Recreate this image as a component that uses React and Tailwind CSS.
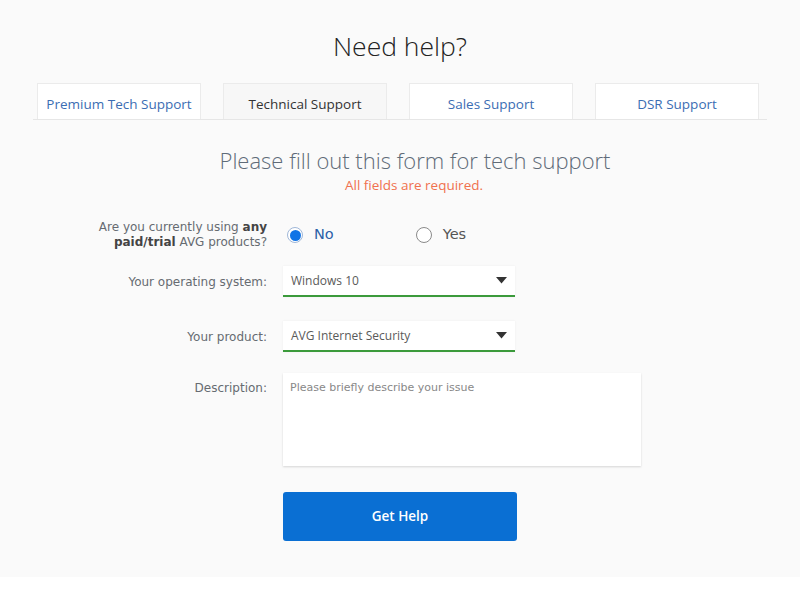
import React from "react";

const tabs = [
  { label: "Premium Tech Support", active: false },
  { label: "Technical Support", active: true },
  { label: "Sales Support", active: false },
  { label: "DSR Support", active: false },
];

function Caret() {
  return (
    <svg width="11" height="7" viewBox="0 0 11 7" className="shrink-0">
      <path d="M0 0 L11 0 L5.5 6.5 Z" fill="#333" />
    </svg>
  );
}

function Select({ value }) {
  return (
    <div className="flex h-[31px] w-[232px] items-center justify-between border-b-2 border-[#3b9a3b] bg-white pl-[8px] pr-[8px] shadow-[0_0_2px_rgba(0,0,0,0.06)]">
      <span className="text-[12px] text-[#5a5a5a]" style={{ fontFamily: "'Open Sans', sans-serif" }}>{value}</span>
      <Caret />
    </div>
  );
}

export default function App() {
  const labelFont = { fontFamily: "'DejaVu Sans', Verdana, sans-serif" };
  const sans = { fontFamily: "'Open Sans', 'Noto Sans', sans-serif" };
  return (
    <div className="w-[800px] h-[600px] bg-white">
      <div className="bg-[#fafafa] pb-[36px] pt-[27px]" style={sans}>
        <h1 className="text-center text-[26.5px] font-light leading-[38px] text-[#222]">Need help?</h1>
        <div className="mx-[33px] mt-[18px] flex gap-[22px] border-b border-[#e6e6e6] pl-[4px]">
          {tabs.map((t) => (
            <div
              key={t.label}
              className={
                "flex h-[36px] w-[164px] items-center justify-center border border-b-0 border-[#ebebeb] pt-[6px] text-[13.5px] " +
                (t.active ? "bg-[#f7f7f7] text-[#333]" : "bg-white text-[#3b6db3]")
              }
            >
              {t.label}
            </div>
          ))}
        </div>

        <h2 className="mt-[25px] pl-[30px] text-center text-[22px] font-light leading-[30px] text-[#5f6b78]">
          Please fill out this form for tech support
        </h2>
        <p className="pl-[28px] text-center text-[13.5px] leading-[20px] text-[#f0714e]">All fields are required.</p>

        <div className="mt-[25px] flex items-center">
          <div className="w-[267px] text-right text-[12px] leading-[15px] text-[#666b71]" style={labelFont}>
            Are you currently using <b className="text-[#444]">any</b>
            <br />
            <b className="text-[#444]">paid/trial</b> AVG products?
          </div>
          <div className="ml-[20px] flex items-center">
            <div className="flex items-center">
              <span className="flex h-[16px] w-[16px] items-center justify-center rounded-full border border-[#9fb7d8] bg-white">
                <span className="h-[11px] w-[11px] rounded-full bg-[#1174e6]" />
              </span>
              <span className="ml-[11px] text-[14.5px] text-[#2b5fa8]" style={labelFont}>No</span>
            </div>
            <div className="ml-[82px] flex items-center">
              <span className="h-[16px] w-[16px] rounded-full border border-[#8a8a8a] bg-white" />
              <span className="ml-[11px] text-[14.5px] text-[#555]" style={labelFont}>Yes</span>
            </div>
          </div>
        </div>

        <div className="mt-[16px] flex items-center">
          <div className="w-[267px] text-right text-[12px] text-[#666b71]" style={labelFont}>Your operating system:</div>
          <div className="ml-[16px]"><Select value="Windows 10" /></div>
        </div>

        <div className="mt-[24px] flex items-center">
          <div className="w-[267px] text-right text-[12px] text-[#666b71]" style={labelFont}>Your product:</div>
          <div className="ml-[16px]"><Select value="AVG Internet Security" /></div>
        </div>

        <div className="mt-[21px] flex items-start">
          <div className="w-[267px] pt-[6px] text-right text-[12px] text-[#666b71]" style={labelFont}>Description:</div>
          <div className="ml-[16px] h-[93px] w-[358px] bg-white px-[7px] pt-[7px] text-[11px] text-[#888]" style={{ ...labelFont, boxShadow: "0 1px 2px rgba(0,0,0,0.15)" }}>
            Please briefly describe your issue
          </div>
        </div>

        <div className="mt-[26px] flex">
          <button className="ml-[283px] h-[49px] w-[234px] rounded-[3px] bg-[#0a6fd3] text-[13.5px] font-semibold text-white">
            Get Help
          </button>
        </div>
      </div>
    </div>
  );
}
